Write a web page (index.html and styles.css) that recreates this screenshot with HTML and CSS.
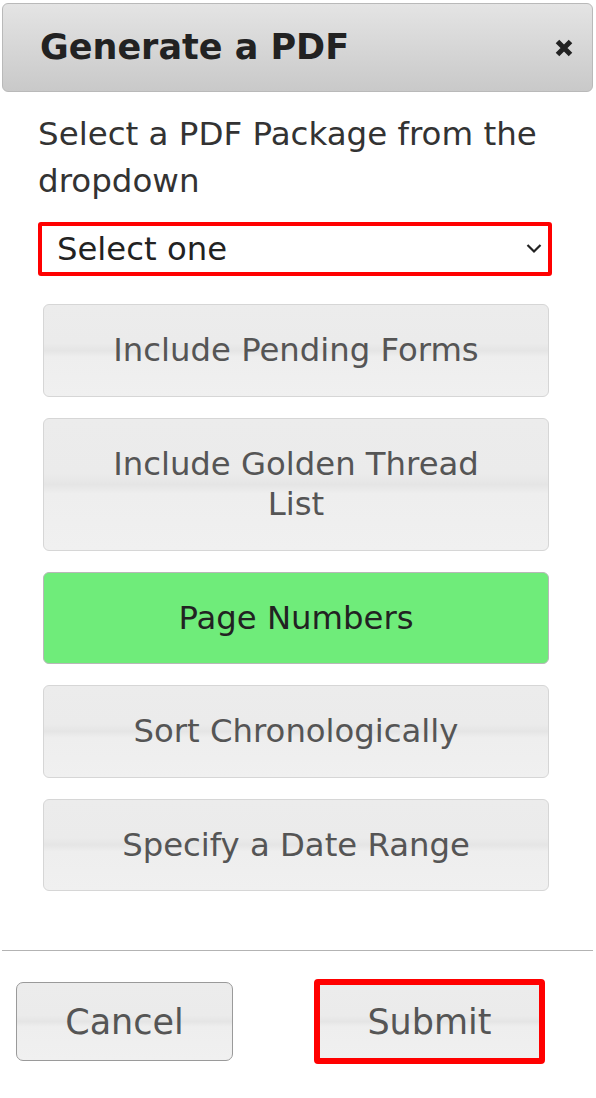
FILE: index.html
```html
<!DOCTYPE html>
<html lang="en">
<head>
<meta charset="utf-8">
<title>Generate a PDF</title>
<link rel="stylesheet" href="styles.css">
</head>
<body>
<div class="dialog">
  <div class="dialog-header">
    <h1 class="dialog-title">Generate a PDF</h1>
    <button class="close-btn" type="button" aria-label="Close">
      <svg width="20" height="20" viewBox="0 0 20 20"><path d="M3.5 3.5 L16.5 16.5 M16.5 3.5 L3.5 16.5" stroke="#222" stroke-width="5" stroke-linecap="butt" fill="none"/></svg>
    </button>
  </div>
  <div class="dialog-body">
    <p class="intro">Select a PDF Package from the dropdown</p>
    <div class="select-wrap">
      <select class="package-select">
        <option>Select one</option>
      </select>
      <svg class="chevron" width="16" height="11" viewBox="0 0 16 11"><path d="M1.5 2 L8 8.5 L14.5 2" stroke="#222" stroke-width="2.2" fill="none"/></svg>
    </div>
    <div class="options">
      <button class="opt-btn" type="button">Include Pending Forms</button>
      <button class="opt-btn" type="button">Include Golden Thread<br>List</button>
      <button class="opt-btn active" type="button">Page Numbers</button>
      <button class="opt-btn" type="button">Sort Chronologically</button>
      <button class="opt-btn" type="button">Specify a Date Range</button>
    </div>
  </div>
  <div class="dialog-footer">
    <button class="foot-btn cancel" type="button">Cancel</button>
    <button class="foot-btn submit" type="button">Submit</button>
  </div>
</div>
</body>
</html>
```
FILE: styles.css
```css
html, body {
  margin: 0;
  padding: 0;
  background: #fff;
}
body {
  font-family: "DejaVu Sans", Verdana, sans-serif;
  color: #333;
}
.dialog {
  width: 596px;
  padding-top: 3px;
}
.dialog-header {
  margin: 0 3px 0 2px;
  height: 87px;
  border: 1px solid #b9b9b9;
  border-radius: 6px;
  background: linear-gradient(#e4e4e4, #c9c9c9);
  display: flex;
  align-items: center;
  justify-content: space-between;
  padding: 0 18px 0 37px;
}
.dialog-title {
  margin: 0;
  font-size: 35px;
  font-weight: bold;
  color: #222;
  line-height: 1;
}
.close-btn {
  border: 0;
  background: none;
  padding: 0;
  width: 20px;
  height: 20px;
  display: flex;
}
.dialog-body {
  padding: 19px 44px 0 38px;
}
.intro {
  margin: 0;
  font-size: 32.5px;
  line-height: 46.7px;
  color: #333;
}
.select-wrap {
  position: relative;
  margin-top: 18px;
  width: 514px;
}
.package-select {
  appearance: none;
  -webkit-appearance: none;
  display: block;
  width: 514px;
  height: 54px;
  border: 4px solid #ff0000;
  border-radius: 3px;
  background: #fff;
  font-family: "DejaVu Sans", Verdana, sans-serif;
  font-size: 32.3px;
  color: #222;
  padding: 0 0 0 15px;
  margin: 0;
}
.chevron {
  position: absolute;
  right: 10px;
  top: 21px;
}
.options {
  display: flex;
  flex-direction: column;
  gap: 21px;
  margin-top: 28px;
  padding-left: 5px;
}
.opt-btn {
  width: 506px;
  margin: 0;
  padding: 25px 10px;
  border: 1px solid #d6d6d6;
  border-radius: 6px;
  background: linear-gradient(#ececec 0%, #ebebeb 42%, #e5e5e5 50%, #eeeeee 57%, #f0f0f0 100%);
  font-family: "DejaVu Sans", Verdana, sans-serif;
  font-size: 32.3px;
  line-height: 40.5px;
  color: #555;
  text-align: center;
}
.opt-btn.active {
  background: #6fec7a;
  border-color: #b8b8b8;
  color: #222;
}
.dialog-footer {
  margin: 59px 3px 0 2px;
  border-top: 1px solid #b3b3b3;
  padding: 28px 0 0 14px;
  display: flex;
  align-items: center;
}
.foot-btn {
  margin: 0;
  font-family: "DejaVu Sans", Verdana, sans-serif;
  font-size: 35px;
  color: #555;
  background: linear-gradient(#ececec 0%, #ebebeb 42%, #e5e5e5 50%, #eeeeee 57%, #f0f0f0 100%);
  padding: 0;
}
.cancel {
  width: 217px;
  height: 79px;
  border: 1px solid #9a9a9a;
  border-radius: 7px;
}
.submit {
  width: 231px;
  height: 85px;
  margin-left: 81px;
  border: 6px solid #ff0000;
  border-radius: 4px;
}
```
